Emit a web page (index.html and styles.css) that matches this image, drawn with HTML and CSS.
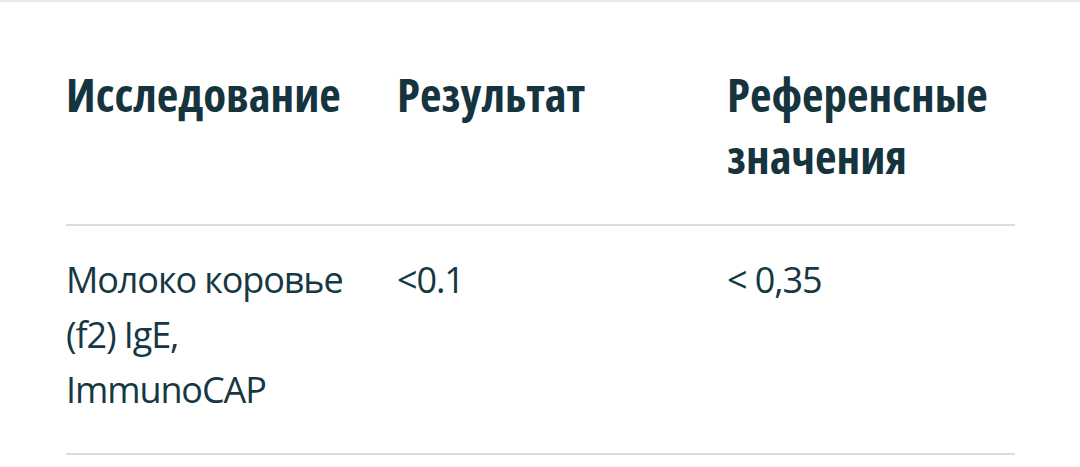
FILE: index.html
```html
<!DOCTYPE html>
<html lang="ru">
<head>
<meta charset="utf-8">
<link rel="stylesheet" href="styles.css">
</head>
<body>
<div class="topbar"></div>
<div class="wrap">
  <div class="table">
    <div class="row head">
      <div class="cell">Исследование</div>
      <div class="cell">Результат</div>
      <div class="cell">Референсные значения</div>
    </div>
    <div class="row body">
      <div class="cell">Молоко коровье (f2) IgE, ImmunoCAP</div>
      <div class="cell">&lt;0.1</div>
      <div class="cell">&lt; 0,35</div>
    </div>
  </div>
</div>
</body>
</html>
```
FILE: styles.css
```css
html, body {
  margin: 0;
  padding: 0;
  background: #ffffff;
}
body {
  font-family: "Open Sans", "Noto Sans", sans-serif;
  color: #163843;
  overflow: hidden;
}
.topbar {
  height: 2px;
  background: #e5e9e9;
}
.wrap {
  padding: 0 65px 0 66px;
}
.table {
  display: flex;
  flex-direction: column;
}
.row {
  display: grid;
  grid-template-columns: 331px 330px 1fr;
  border-bottom: 2px solid #d9dddd;
}
.head {
  padding: 61px 0 37px;
  font-size: 47px;
  line-height: 62px;
  font-weight: 700;
  font-stretch: 82%;
  color: #15343e;
}
.body {
  padding: 26px 0 36px;
  font-size: 36px;
  line-height: 55px;
  font-weight: 400;
  font-stretch: 90%;
  letter-spacing: -1.1px;
}
.cell {
  padding-right: 20px;
}
```
